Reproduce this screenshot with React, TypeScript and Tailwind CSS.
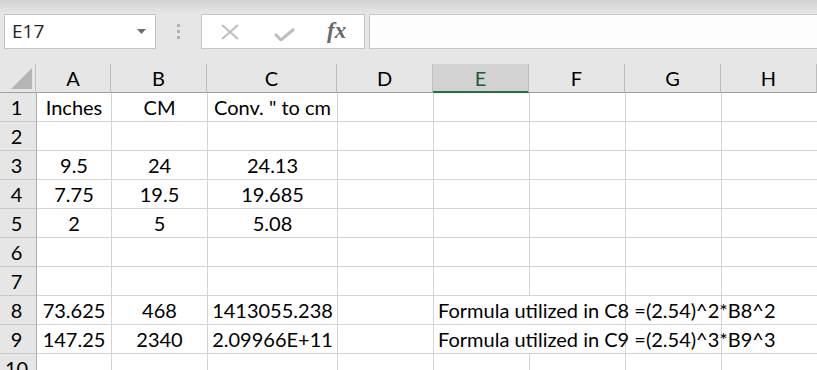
import React from "react";

const cols = [
  { k: "A", w: 75 },
  { k: "B", w: 96 },
  { k: "C", w: 130 },
  { k: "D", w: 96 },
  { k: "E", w: 96 },
  { k: "F", w: 96 },
  { k: "G", w: 96 },
  { k: "H", w: 96 },
];

const data: Record<number, Record<string, string>> = {
  1: { A: "Inches", B: "CM", C: 'Conv. " to cm' },
  3: { A: "9.5", B: "24", C: "24.13" },
  4: { A: "7.75", B: "19.5", C: "19.685" },
  5: { A: "2", B: "5", C: "5.08" },
  8: { A: "73.625", B: "468", C: "1413055.238", E: "Formula utilized in C8 =(2.54)^2*B8^2" },
  9: { A: "147.25", B: "2340", C: "2.09966E+11", E: "Formula utilized in C9 =(2.54)^3*B9^3" },
};

const cellFont = { fontFamily: "Lato, 'Open Sans', sans-serif" };

export default function App() {
  return (
    <div
      className="w-[817px] h-[370px] overflow-hidden bg-[#e6e6e6] text-black"
      style={cellFont}
    >
      <div className="h-[14px] bg-gradient-to-b from-[#d3d3d3] to-[#e6e6e6]" />
      <div className="flex h-[35px]">
        <div className="ml-[4px] w-[152px] h-full border border-[#c6c6c6] bg-white flex items-center justify-between pl-[7px] pr-[9px]">
          <span className="text-[19px] text-[#222]" style={{ fontFamily: "'Open Sans', sans-serif" }}>E17</span>
          <svg width="9" height="5" viewBox="0 0 9 5">
            <path d="M0 0H9L4.5 5Z" fill="#6e6e6e" />
          </svg>
        </div>
        <div className="w-[45px] flex flex-col items-center justify-center gap-[3px]">
          <div className="w-[3px] h-[3px] bg-[#b3b3b3]" />
          <div className="w-[3px] h-[3px] bg-[#b3b3b3]" />
          <div className="w-[3px] h-[3px] bg-[#b3b3b3]" />
        </div>
        <div className="w-[164px] h-full border border-[#c6c6c6] bg-white flex items-center">
          <svg width="18" height="16" viewBox="0 0 18 16" className="ml-[19px]">
            <path d="M1 1L17 15M17 1L1 15" stroke="#bdbdbd" strokeWidth="2" fill="none" />
          </svg>
          <svg width="21" height="13" viewBox="0 0 21 13" className="ml-[35px] mt-[5px]">
            <path d="M1 6L7 12L20 1" stroke="#bdbdbd" strokeWidth="3" fill="none" />
          </svg>
          <span
            className="ml-[32px] text-[23px] italic font-bold text-[#6a6a6a]"
            style={{ fontFamily: "'Liberation Serif', serif" }}
          >
            fx
          </span>
        </div>
        <div className="ml-[4px] flex-1 h-full border-y border-l border-[#c6c6c6] bg-[#fdfdfd]" />
      </div>
      <div className="h-[15px]" />
      {/* header row */}
      <div className="flex h-[29px]">
        <div className="w-[37px] h-full border-r border-b border-r-[#c0c0c0] border-b-[#9e9e9e] flex items-end justify-end pr-[3px] pb-[3px]">
          <svg width="21" height="21" viewBox="0 0 21 21">
            <path d="M21 0V21H0Z" fill="#b5b5b5" />
          </svg>
        </div>
        {cols.map((c) => (
          <div
            key={c.k}
            style={{ width: c.w }}
            className={
              "shrink-0 h-full border-r border-r-[#bdbdbd] flex items-center justify-center text-[20px] " +
              (c.k === "E"
                ? "bg-[#d2d2d2] border-b-2 border-b-[#217346] text-[#1d5e3a]"
                : "border-b border-b-[#9e9e9e]")
            }
          >
            {c.k}
          </div>
        ))}
      </div>
      {Array.from({ length: 10 }, (_, i) => i + 1).map((r) => (
        <div key={r} className="flex h-[29px]">
          <div className="w-[37px] shrink-0 h-full border-r border-b border-r-[#ababab] border-b-[#c8c8c8] flex items-center justify-center pr-[3px] text-[20px]">
            {r}
          </div>
          {cols.map((c) => {
            const v = data[r]?.[c.k];
            const isE = c.k === "E";
            return (
              <div
                key={c.k}
                style={{ width: c.w }}
                className={
                  "shrink-0 h-full bg-white border-b border-b-[#d4d4d4] flex items-center text-[20px] whitespace-nowrap " +
                  (isE ? "pl-[4px] relative z-10 " : "justify-center ") +
                  (isE && v ? "" : "border-r border-r-[#d4d4d4]")
                }
              >
                {v ?? ""}
              </div>
            );
          })}
        </div>
      ))}
    </div>
  );
}
